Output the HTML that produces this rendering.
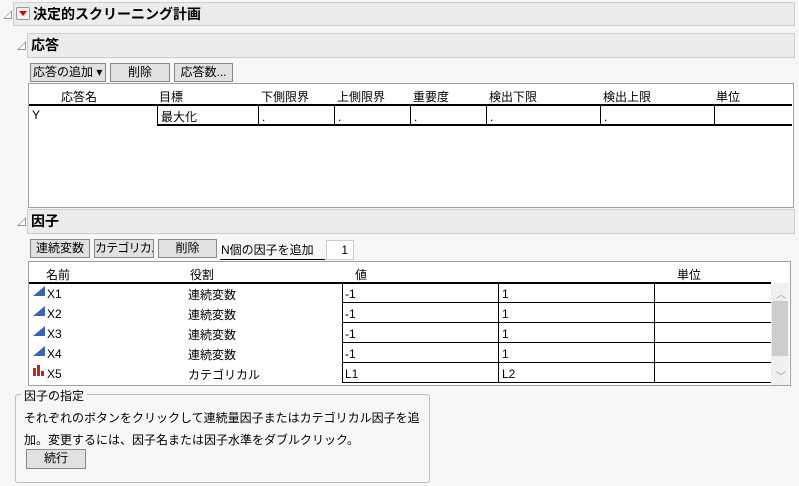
<!DOCTYPE html>
<html><head><meta charset="utf-8"><style>
*{box-sizing:border-box;margin:0;padding:0}
body{width:799px;height:486px;background:#f7f7f7;font-family:"Liberation Sans","Noto Sans CJK JP",sans-serif;font-size:12px;color:#000;position:relative;overflow:hidden}
.a{position:absolute;white-space:nowrap}
.hdr{position:absolute;background:#ececec;border:1px solid #cfcfcf;font-weight:bold;font-size:14px;line-height:22px}
.btn{position:absolute;background:#e1e1e1;border:1px solid #8a8a8a;text-align:center;line-height:16px;font-size:12px;white-space:nowrap;overflow:hidden}
.tri{position:absolute;width:0;height:0;border-left:9px solid transparent;border-bottom:9px solid #9a9a9a}
.tri:after{content:"";position:absolute;left:-7px;top:2px;border-left:6px solid transparent;border-bottom:6px solid #fff}
.box{position:absolute;background:#fff;border:1px solid #a0a0a0}
.hl{position:absolute;height:2px;background:#000}
.vl{position:absolute;width:2px;background:#000}
.ic{position:absolute}
</style></head><body>
<div class="tri" style="left:3px;top:10px"></div>
<div class="hdr" style="left:13px;top:2px;width:782px;height:24px;padding-left:19px">決定的スクリーニング計画</div>
<div class="a" style="left:16px;top:7px;width:14px;height:13px;border:1px solid #999;border-radius:2px;background:#f4f4f4"></div>
<div class="a" style="left:19px;top:11px;border-left:4px solid transparent;border-right:4px solid transparent;border-top:5px solid #d00"></div>

<div class="tri" style="left:17px;top:41px"></div>
<div class="hdr" style="left:27px;top:33px;width:768px;height:25px;padding-left:3px">応答</div>
<div class="btn" style="left:30px;top:63px;width:76px;height:19px;text-align:left;padding-left:2px">応答の追加 ▾</div>
<div class="btn" style="left:110px;top:63px;width:60px;height:19px">削除</div>
<div class="btn" style="left:174px;top:63px;width:59px;height:19px">応答数...</div>

<div class="box" style="left:28px;top:83px;width:766px;height:125px"></div>
<div class="a" style="left:61px;top:88px">応答名</div>
<div class="a" style="left:159px;top:88px">目標</div>
<div class="a" style="left:261px;top:88px">下側限界</div>
<div class="a" style="left:337px;top:88px">上側限界</div>
<div class="a" style="left:413px;top:88px">重要度</div>
<div class="a" style="left:489px;top:88px">検出下限</div>
<div class="a" style="left:603px;top:88px">検出上限</div>
<div class="a" style="left:716px;top:88px">単位</div>
<div class="hl" style="left:29px;top:104px;width:763px"></div>
<div class="hl" style="left:157px;top:124px;width:635px"></div>
<div class="vl" style="left:157px;top:104px;height:21px;width:1px"></div>
<div class="vl" style="left:258px;top:104px;height:21px;width:1px"></div>
<div class="vl" style="left:334px;top:104px;height:21px;width:1px"></div>
<div class="vl" style="left:410px;top:104px;height:21px;width:1px"></div>
<div class="vl" style="left:486px;top:104px;height:21px;width:1px"></div>
<div class="vl" style="left:600px;top:104px;height:21px;width:1px"></div>
<div class="vl" style="left:714px;top:104px;height:21px;width:1px"></div>
<div class="a" style="left:32px;top:108px">Y</div>
<div class="a" style="left:161px;top:108px">最大化</div>
<div class="a" style="left:262px;top:110px">.</div>
<div class="a" style="left:338px;top:110px">.</div>
<div class="a" style="left:414px;top:110px">.</div>
<div class="a" style="left:490px;top:110px">.</div>
<div class="a" style="left:604px;top:110px">.</div>

<div class="tri" style="left:17px;top:217px"></div>
<div class="hdr" style="left:27px;top:209px;width:768px;height:25px;padding-left:3px">因子</div>
<div class="btn" style="left:30px;top:239px;width:60px;height:19px">連続変数</div>
<div class="btn" style="left:94px;top:239px;width:60px;height:19px;letter-spacing:-0.8px">カテゴリカル</div>
<div class="btn" style="left:158px;top:239px;width:59px;height:19px">削除</div>
<div class="a" style="left:221px;top:241px">N個の因子を追加</div>
<div class="a" style="left:220px;top:259px;width:105px;height:1px;background:#000"></div>
<div class="a" style="left:326px;top:240px;width:28px;height:20px;background:#fff;border:1px solid #ccc;text-align:right;padding-right:5px;line-height:18px">1</div>

<div class="box" style="left:28px;top:261px;width:763px;height:125px"></div>
<div class="a" style="left:46px;top:266px">名前</div>
<div class="a" style="left:190px;top:266px">役割</div>
<div class="a" style="left:355px;top:266px">値</div>
<div class="a" style="left:677px;top:266px">単位</div>
<div class="hl" style="left:29px;top:282px;width:742px"></div>
<div class="vl" style="left:342px;top:283px;height:100px;width:1px"></div>
<div class="vl" style="left:498px;top:283px;height:100px;width:1px"></div>
<div class="vl" style="left:654px;top:283px;height:100px;width:1px"></div>
<div class="hl" style="left:342px;top:302px;width:429px;height:1px"></div>
<div class="hl" style="left:342px;top:322px;width:429px;height:1px"></div>
<div class="hl" style="left:342px;top:342px;width:429px;height:1px"></div>
<div class="hl" style="left:342px;top:362px;width:429px;height:1px"></div>
<div class="hl" style="left:342px;top:382px;width:429px;height:1px"></div>
<div class="a" style="left:771px;top:283px;width:18px;height:102px;background:#f0f0f0"></div>
<div class="a" style="left:772px;top:301px;width:16px;height:55px;background:#cdcdcd"></div>
<div class="a" style="left:776px;top:286px;color:#999;font-size:10px">︿</div>
<div class="a" style="left:776px;top:368px;color:#999;font-size:10px">﹀</div>

<svg class="ic" style="left:33px;top:286px" width="12" height="10"><path d="M0 10L12 0V10Z" fill="#3a64b4"/></svg>
<svg class="ic" style="left:33px;top:306px" width="12" height="10"><path d="M0 10L12 0V10Z" fill="#3a64b4"/></svg>
<svg class="ic" style="left:33px;top:326px" width="12" height="10"><path d="M0 10L12 0V10Z" fill="#3a64b4"/></svg>
<svg class="ic" style="left:33px;top:346px" width="12" height="10"><path d="M0 10L12 0V10Z" fill="#3a64b4"/></svg>
<svg class="ic" style="left:33px;top:365px" width="12" height="11"><path d="M0 3h3v8h-3zM4 0h3v11h-3zM8 6h3v5h-3z" fill="#c0281e"/></svg>
<div class="a" style="left:47px;top:287px">X1</div>
<div class="a" style="left:47px;top:307px">X2</div>
<div class="a" style="left:47px;top:327px">X3</div>
<div class="a" style="left:47px;top:347px">X4</div>
<div class="a" style="left:47px;top:367px">X5</div>
<div class="a" style="left:188px;top:286px">連続変数</div>
<div class="a" style="left:188px;top:306px">連続変数</div>
<div class="a" style="left:188px;top:326px">連続変数</div>
<div class="a" style="left:188px;top:346px">連続変数</div>
<div class="a" style="left:188px;top:366px">カテゴリカル</div>
<div class="a" style="left:345px;top:287px">-1</div>
<div class="a" style="left:345px;top:307px">-1</div>
<div class="a" style="left:345px;top:327px">-1</div>
<div class="a" style="left:345px;top:347px">-1</div>
<div class="a" style="left:345px;top:367px">L1</div>
<div class="a" style="left:502px;top:287px">1</div>
<div class="a" style="left:502px;top:307px">1</div>
<div class="a" style="left:502px;top:327px">1</div>
<div class="a" style="left:502px;top:347px">1</div>
<div class="a" style="left:502px;top:367px">L2</div>

<div class="a" style="left:15px;top:394px;width:415px;height:89px;border:1px solid #bdbdbd;border-radius:3px"></div>
<div class="a" style="left:21px;top:387px;background:#f7f7f7;padding:0 3px">因子の指定</div>
<div class="a" style="left:24px;top:409px">それぞれのボタンをクリックして連続量因子またはカテゴリカル因子を追</div>
<div class="a" style="left:24px;top:431px">加。変更するには、因子名または因子水準をダブルクリック。</div>
<div class="btn" style="left:26px;top:449px;width:60px;height:20px">続行</div>
</body></html>
